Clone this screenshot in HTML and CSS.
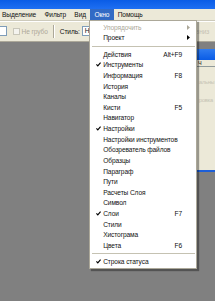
FILE: index.html
```html
<!DOCTYPE html>
<html lang="ru">
<head>
<meta charset="utf-8">
<link rel="stylesheet" href="styles.css">
</head>
<body>
<div class="app">
  <div class="titlebar"></div>
  <div class="menubar">
    <span class="mb-item first">Выделение</span>
    <span class="mb-item">Фильтр</span>
    <span class="mb-item">Вид</span>
    <span class="mb-item active">Окно</span>
    <span class="mb-item">Помощь</span>
  </div>
  <div class="toolbar">
    <div class="input-stub"></div>
    <div class="chk"><span class="box"></span><span class="chk-label">Не грубо</span></div>
    <div class="tb-sep"></div>
    <span class="lbl">Стиль:</span>
    <div class="combo">Н</div>
    <span class="faded">вниз</span>
  </div>
  <div class="workspace">
    <div class="palette">
      <div class="pal-title"></div>
      <div class="pal-tabs"><span class="tab">Ч</span></div>
      <div class="pal-body">
        <span class="pal-text">альны</span>
        <span class="pal-text">ровка</span>
      </div>
    </div>
    <div class="palette2"></div>
  </div>

  <div class="menu">
    <div class="mi disabled"><span class="c"></span><span class="t">Упорядочить</span><span class="k"></span><span class="a"><svg width="3" height="5" viewBox="0 0 3 5"><path d="M0 0 L3 2.5 L0 5 Z" fill="#aca899"/></svg></span></div>
    <div class="mi"><span class="c"></span><span class="t">Проект</span><span class="k"></span><span class="a"><svg width="3" height="5" viewBox="0 0 3 5"><path d="M0 0 L3 2.5 L0 5 Z" fill="#000"/></svg></span></div>
    <div class="msep"></div>
    <div class="mi"><span class="c"></span><span class="t">Действия</span><span class="k">Alt+F9</span><span class="a"></span></div>
    <div class="mi"><span class="c"><svg class="ck" width="5" height="5" viewBox="0 0 5 5"><path d="M0.4 2.4 L1.8 3.9 L4.6 0.6" fill="none" stroke="#000" stroke-width="1.2"/></svg></span><span class="t">Инструменты</span><span class="k"></span><span class="a"></span></div>
    <div class="mi"><span class="c"></span><span class="t">Информация</span><span class="k">F8</span><span class="a"></span></div>
    <div class="mi"><span class="c"></span><span class="t">История</span><span class="k"></span><span class="a"></span></div>
    <div class="mi"><span class="c"></span><span class="t">Каналы</span><span class="k"></span><span class="a"></span></div>
    <div class="mi"><span class="c"></span><span class="t">Кисти</span><span class="k">F5</span><span class="a"></span></div>
    <div class="mi"><span class="c"></span><span class="t">Навигатор</span><span class="k"></span><span class="a"></span></div>
    <div class="mi"><span class="c"><svg class="ck" width="5" height="5" viewBox="0 0 5 5"><path d="M0.4 2.4 L1.8 3.9 L4.6 0.6" fill="none" stroke="#000" stroke-width="1.2"/></svg></span><span class="t">Настройки</span><span class="k"></span><span class="a"></span></div>
    <div class="mi"><span class="c"></span><span class="t">Настройки инструментов</span><span class="k"></span><span class="a"></span></div>
    <div class="mi"><span class="c"></span><span class="t">Обозреватель файлов</span><span class="k"></span><span class="a"></span></div>
    <div class="mi"><span class="c"></span><span class="t">Образцы</span><span class="k"></span><span class="a"></span></div>
    <div class="mi"><span class="c"></span><span class="t">Параграф</span><span class="k"></span><span class="a"></span></div>
    <div class="mi"><span class="c"></span><span class="t">Пути</span><span class="k"></span><span class="a"></span></div>
    <div class="mi"><span class="c"></span><span class="t">Расчеты Слоя</span><span class="k"></span><span class="a"></span></div>
    <div class="mi"><span class="c"></span><span class="t">Символ</span><span class="k"></span><span class="a"></span></div>
    <div class="mi"><span class="c"><svg class="ck" width="5" height="5" viewBox="0 0 5 5"><path d="M0.4 2.4 L1.8 3.9 L4.6 0.6" fill="none" stroke="#000" stroke-width="1.2"/></svg></span><span class="t">Слои</span><span class="k">F7</span><span class="a"></span></div>
    <div class="mi"><span class="c"></span><span class="t">Стили</span><span class="k"></span><span class="a"></span></div>
    <div class="mi"><span class="c"></span><span class="t">Хистограма</span><span class="k"></span><span class="a"></span></div>
    <div class="mi"><span class="c"></span><span class="t">Цвета</span><span class="k">F6</span><span class="a"></span></div>
    <div class="msep"></div>
    <div class="mi"><span class="c"><svg class="ck" width="5" height="5" viewBox="0 0 5 5"><path d="M0.4 2.4 L1.8 3.9 L4.6 0.6" fill="none" stroke="#000" stroke-width="1.2"/></svg></span><span class="t">Строка статуса</span><span class="k"></span><span class="a"></span></div>
  </div>
</div>
</body>
</html>
```

FILE: styles.css
```css
* { box-sizing: border-box; }
html, body { margin: 0; padding: 0; }
body {
  width: 215px;
  height: 301px;
  overflow: hidden;
  background: #808080;
  font-family: "Liberation Sans", Arial, sans-serif;
  font-size: 6.6px;
  letter-spacing: -0.1px;
  color: #111;
}
.app {
  position: relative;
  width: 215px;
  height: 301px;
  overflow: hidden;
  display: flex;
  flex-direction: column;
}
.titlebar {
  height: 9px;
  background: linear-gradient(#0a5ce6, #1e6ff2);
}
.menubar {
  height: 11px;
  background: #ece9d8;
  display: flex;
  align-items: stretch;
}
.mb-item {
  padding: 0 4.2px;
  display: flex;
  align-items: center;
  white-space: nowrap;
}
.mb-item.first { margin-left: -2.2px; }
.mb-item.active {
  background: #316ac5;
  color: #fff;
}
.toolbar {
  height: 22px;
  background: #ece9d8;
  border-top: 1px solid #cdcabb;
  border-bottom: 1px solid #aca899;
  box-shadow: inset 0 1px 0 #fff;
  display: flex;
  align-items: center;
  white-space: nowrap;
}
.input-stub {
  width: 17px;
  height: 10px;
  margin-left: -10px;
  background: #fff;
  border: 1px solid #7f9db9;
}
.chk {
  display: flex;
  align-items: center;
  margin-left: 6px;
  color: #aca899;
}
.box {
  width: 7px;
  height: 7px;
  border: 1px solid #c9c7ba;
  background: #f4f3ee;
  margin-right: 1.5px;
}
.tb-sep {
  width: 2px;
  height: 13px;
  margin-left: 5px;
  border-left: 1px solid #aca899;
  border-right: 1px solid #fff;
}
.lbl { margin-left: 5px; }
.combo {
  margin-left: 2px;
  width: 40px;
  height: 10px;
  background: #fff;
  border: 1px solid #7f9db9;
  padding-left: 2px;
  line-height: 8px;
}
.faded {
  margin-left: 74px;
  color: #c6c3b4;
}
.workspace {
  flex: 1;
  position: relative;
}
.palette {
  position: absolute;
  left: 170px;
  top: 7px;
  width: 45px;
  height: 122px;
  background: #ece9d8;
  display: flex;
  flex-direction: column;
}
.pal-title {
  height: 11px;
  background: linear-gradient(#2f7cf0, #0a5ce6);
}
.pal-tabs {
  height: 7px;
  display: flex;
  align-items: flex-end;
  padding-left: 28px;
  border-bottom: 1px solid #919b9c;
}
.tab { font-size: 5.5px; line-height: 6px; }
.pal-body {
  flex: 1;
  display: flex;
  flex-direction: column;
  gap: 12px;
  padding: 12px 0 0 29px;
  color: #c6c3b4;
  font-size: 5.6px;
  letter-spacing: -0.2px;
}
.palette2 {
  position: absolute;
  left: 170px;
  top: 128px;
  width: 45px;
  height: 2px;
  background: #1d5fd8;
}
.menu {
  position: absolute;
  left: 89px;
  top: 20px;
  width: 108px;
  background: #fff;
  border: 1px solid #aca899;
  padding: 1px 0;
  box-shadow: 2px 2px 1px rgba(0,0,0,0.35);
}
.mi {
  height: 10.625px;
  display: grid;
  grid-template-columns: 13.2px 1fr auto 14px;
  align-items: center;
  white-space: nowrap;
}
.mi.disabled { color: #aca899; }
.c { display: flex; padding-left: 6.2px; }
.ck { display: block; }
.k { text-align: right; }
.a { display: flex; padding-left: 5px; }
.a svg { display: block; }
.msep {
  height: 5.625px;
  display: flex;
  align-items: center;
  padding: 0 1px 0 2px;
}
.msep::before {
  content: "";
  flex: 1;
  border-top: 1px solid #c5c2b2;
}
```
